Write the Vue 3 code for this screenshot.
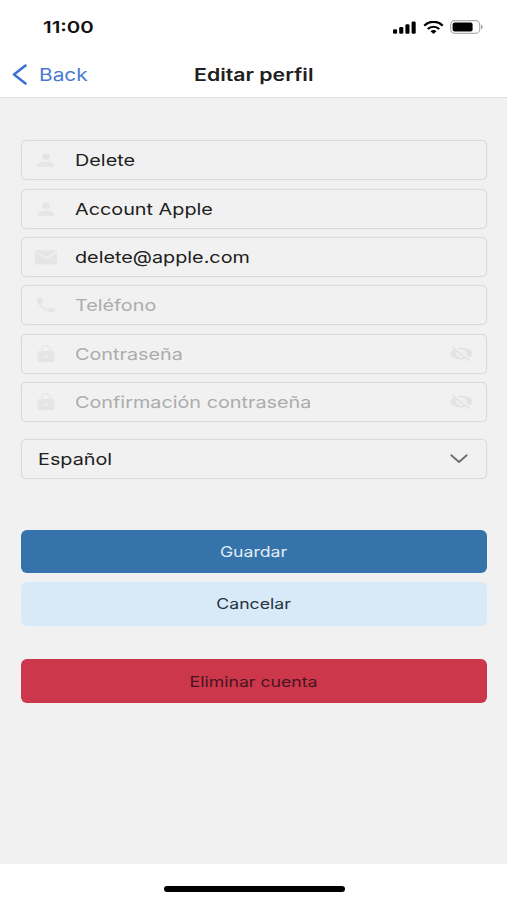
<template>
  <div class="screen">
    <div class="status-bar">
      <span class="time">{{ time }}</span>
      <div class="status-icons">
        <svg class="signal" viewBox="0 0 24 13" fill="#000">
          <rect x="0" y="8.2" width="4.1" height="4.6" rx="1.3" />
          <rect x="6.2" y="6" width="4.1" height="6.8" rx="1.3" />
          <rect x="12.4" y="3.3" width="4.1" height="9.5" rx="1.3" />
          <rect x="18.6" y="0.4" width="4.1" height="12.4" rx="1.3" />
        </svg>
        <svg class="wifi" viewBox="0 0 20 13" fill="none" stroke="#000">
          <path d="M0.8 4.6C6 -0.4 14 -0.4 19.2 4.6" stroke-width="2.3" />
          <path d="M4.2 8C7.5 5 12.5 5 15.8 8" stroke-width="2.2" />
          <path d="M7 10.2C8.8 8.7 11.2 8.7 13 10.2L10 12.9Z" fill="#000" stroke="none" />
        </svg>
        <svg class="battery" viewBox="0 0 34 14">
          <rect x="0.7" y="0.7" width="29" height="12.6" rx="3.8" fill="none" stroke="#b0b0b0" stroke-width="1.2" />
          <rect x="2.6" y="2.4" width="20" height="9.2" rx="2" fill="#000" />
          <path d="M31 4.8C33.2 5.2 33.2 8.8 31 9.2Z" fill="#a0a0a0" />
        </svg>
      </div>
    </div>

    <header class="nav-bar">
      <button class="back" type="button">
        <svg class="back-icon" viewBox="0 0 15 21" fill="none" stroke="#3a70d0" stroke-width="2.5" stroke-linecap="round" stroke-linejoin="round">
          <path d="M13.5 1.6L2 10.5L13.5 19.4" />
        </svg>
        <span class="back-label">Back</span>
      </button>
      <h1 class="title"><span>Editar perfil</span></h1>
    </header>

    <main class="content">
      <div class="fields">
        <div v-for="field in fields" :key="field.name" class="field">
          <svg class="field-icon" viewBox="0 0 24 24" preserveAspectRatio="none" fill="currentColor">
            <path :d="icons[field.icon]" fill-rule="evenodd" />
          </svg>
          <div class="input-wrap">
            <input v-model="field.value" class="input" :type="field.type" :placeholder="field.placeholder" spellcheck="false" />
          </div>
          <svg v-if="field.type === 'password'" class="eye-icon" viewBox="0 0 24 24" preserveAspectRatio="none" fill="currentColor">
            <path :d="icons.eyeOff" />
          </svg>
        </div>
      </div>

      <div class="select">
        <span class="select-label">{{ language }}</span>
        <svg class="chevron" viewBox="0 0 18 10" fill="none" stroke="#6b6b6b" stroke-width="1.8" stroke-linecap="round" stroke-linejoin="round">
          <path d="M1.3 1.3L9 8L16.7 1.3" />
        </svg>
      </div>

      <button class="btn save" type="button"><span>Guardar</span></button>
      <button class="btn cancel" type="button"><span>Cancelar</span></button>
      <button class="btn remove" type="button"><span>Eliminar cuenta</span></button>
    </main>

    <footer class="home-area">
      <div class="home-indicator"></div>
    </footer>
  </div>
</template>

<script setup>
import { ref } from 'vue'

const time = '11:00'
const language = ref('Español')

const fields = ref([
  { name: 'name', icon: 'person', type: 'text', value: 'Delete', placeholder: 'Nombre' },
  { name: 'surname', icon: 'person', type: 'text', value: 'Account Apple', placeholder: 'Apellidos' },
  { name: 'email', icon: 'mail', type: 'email', value: 'delete@apple.com', placeholder: 'Email' },
  { name: 'phone', icon: 'phone', type: 'tel', value: '', placeholder: 'Teléfono' },
  { name: 'password', icon: 'lock', type: 'password', value: '', placeholder: 'Contraseña' },
  { name: 'confirm', icon: 'lock', type: 'password', value: '', placeholder: 'Confirmación contraseña' }
])

const icons = {
  person: 'M12 12c2.21 0 4-1.79 4-4s-1.79-4-4-4-4 1.79-4 4 1.79 4 4 4zm0 2c-2.67 0-8 1.34-8 4v2h16v-2c0-2.66-5.33-4-8-4z',
  mail: 'M1 4h22v17H1zM1.8 5.5v1.8L12 14.5l10.2-7.2V5.5L12 12.5z',
  phone: 'M6.6 10.8c1.4 2.8 3.8 5.1 6.6 6.6l2.2-2.2c.3-.3.7-.4 1-.2 1.1.4 2.3.6 3.6.6.6 0 1 .4 1 1V20c0 .6-.4 1-1 1C10.6 21 3 13.4 3 4c0-.6.4-1 1-1h3.5c.6 0 1 .4 1 1 0 1.3.2 2.5.6 3.6.1.3 0 .7-.2 1z',
  lock: 'M18.5 8.5H17V6.5c0-2.76-2.24-5-5-5s-5 2.24-5 5v2H5.5c-1.1 0-2 .9-2 2v9.5c0 1.1.9 2 2 2h13c1.1 0 2-.9 2-2v-9.5c0-1.1-.9-2-2-2zM8.5 8.5v-2c0-1.9 1.6-3.4 3.5-3.4s3.5 1.5 3.5 3.4v2zM12 13.6a1.6 1.6 0 100 3.2 1.6 1.6 0 000-3.2z',
  eyeOff: 'M12 7c2.76 0 5 2.24 5 5 0 .65-.13 1.26-.36 1.83l2.92 2.92c1.51-1.26 2.7-2.89 3.43-4.75-1.73-4.39-6-7.5-11-7.5-1.4 0-2.74.25-3.98.7l2.16 2.16C10.74 7.13 11.35 7 12 7zM2 4.27l2.28 2.28.46.46C3.08 8.3 1.78 10.02 1 12c1.73 4.39 6 7.5 11 7.5 1.55 0 3.03-.3 4.38-.84l.42.42L19.73 22 21 20.73 3.27 3 2 4.27zM7.53 9.8l1.55 1.55c-.05.21-.08.43-.08.65 0 1.66 1.34 3 3 3 .22 0 .44-.03.65-.08l1.55 1.55c-.67.33-1.41.53-2.2.53-2.76 0-5-2.24-5-5 0-.79.2-1.53.53-2.2zm4.31-.78l3.15 3.15.02-.16c0-1.66-1.34-3-3-3l-.17.01z'
}
</script>

<style>
body {
  margin: 0;
}
</style>

<style scoped>
.screen {
  display: flex;
  flex-direction: column;
  width: 507px;
  height: 900px;
  background: #f1f1f1;
  font-family: Inter, "Liberation Sans", sans-serif;
  color: #202020;
  overflow: hidden;
}

button {
  border: none;
  padding: 0;
  font-family: inherit;
  cursor: pointer;
}

.status-bar {
  display: flex;
  align-items: center;
  justify-content: space-between;
  box-sizing: border-box;
  height: 52px;
  padding: 2px 23px 0 43px;
  background: #fff;
}

.time {
  font-size: 16.5px;
  font-weight: 600;
  color: #111;
  transform: scaleX(1.24);
  transform-origin: left;
}

.status-icons {
  display: flex;
  align-items: center;
  gap: 6px;
}

.signal {
  width: 24px;
  height: 13px;
}

.wifi {
  width: 21px;
  height: 13px;
}

.battery {
  width: 34px;
  height: 14px;
}

.nav-bar {
  display: grid;
  grid-template-columns: 1fr auto 1fr;
  align-items: center;
  box-sizing: border-box;
  height: 46px;
  padding: 0 12px;
  background: #fff;
  border-bottom: 1px solid #dedede;
}

.back {
  display: flex;
  align-items: center;
  gap: 11.5px;
  background: transparent;
  color: #4a7bd0;
}

.back-icon {
  width: 15px;
  height: 21px;
}

.back-label {
  font-size: 17.5px;
  transform: scaleX(1.19);
  transform-origin: left;
}

.title {
  margin: 0;
  font-size: 17px;
  font-weight: 600;
}

.title span {
  display: block;
  transform: scaleX(1.25);
}

.content {
  display: flex;
  flex-direction: column;
  flex: 1;
  padding: 42.2px 20.5px 0 21.4px;
}

.fields {
  display: flex;
  flex-direction: column;
  gap: 8.35px;
}

.field,
.select {
  display: flex;
  align-items: center;
  box-sizing: border-box;
  height: 40px;
  border: 1px solid #dadada;
  border-radius: 5px;
  box-shadow: 0 0 1px #d8d8d8;
}

.field {
  padding: 0 13px 0 12px;
}

.field-icon {
  flex-shrink: 0;
  width: 24px;
  height: 20px;
  margin-right: 17px;
  color: #e5e5e5;
}

.input-wrap {
  flex: 1;
  min-width: 0;
}

.input {
  display: block;
  width: 290px;
  padding: 0;
  border: none;
  outline: none;
  background: transparent;
  color: #202020;
  font-family: inherit;
  font-size: 16.5px;
  transform: scaleX(1.2);
  transform-origin: left;
}

.input::placeholder {
  color: #acacac;
  opacity: 1;
}

.eye-icon {
  flex-shrink: 0;
  width: 25px;
  height: 19px;
  margin-right: -1px;
  color: #e3e3e3;
}

.select {
  justify-content: space-between;
  margin-top: 16.6px;
  margin-bottom: 51.2px;
  padding: 0 17.5px 0 16px;
}

.select-label {
  font-size: 16.5px;
  transform: scaleX(1.2);
  transform-origin: left;
}

.chevron {
  width: 18px;
  height: 10px;
}

.btn {
  flex-shrink: 0;
  height: 43.5px;
  border-radius: 6px;
  font-size: 14.3px;
}

.btn span {
  display: block;
  transform: scaleX(1.235);
}

.save {
  margin-bottom: 9px;
  background: #3573aa;
  color: #e2edf7;
}

.cancel {
  margin-bottom: 33.8px;
  background: #d8e9f8;
  color: #26323e;
}

.remove {
  background: #cc374b;
  color: #4a1420;
}

.home-area {
  display: flex;
  justify-content: center;
  box-sizing: border-box;
  height: 36px;
  padding: 22px 0 0 1px;
  background: #fff;
}

.home-indicator {
  width: 181px;
  height: 6px;
  border-radius: 3px;
  background: #000;
}
</style>
